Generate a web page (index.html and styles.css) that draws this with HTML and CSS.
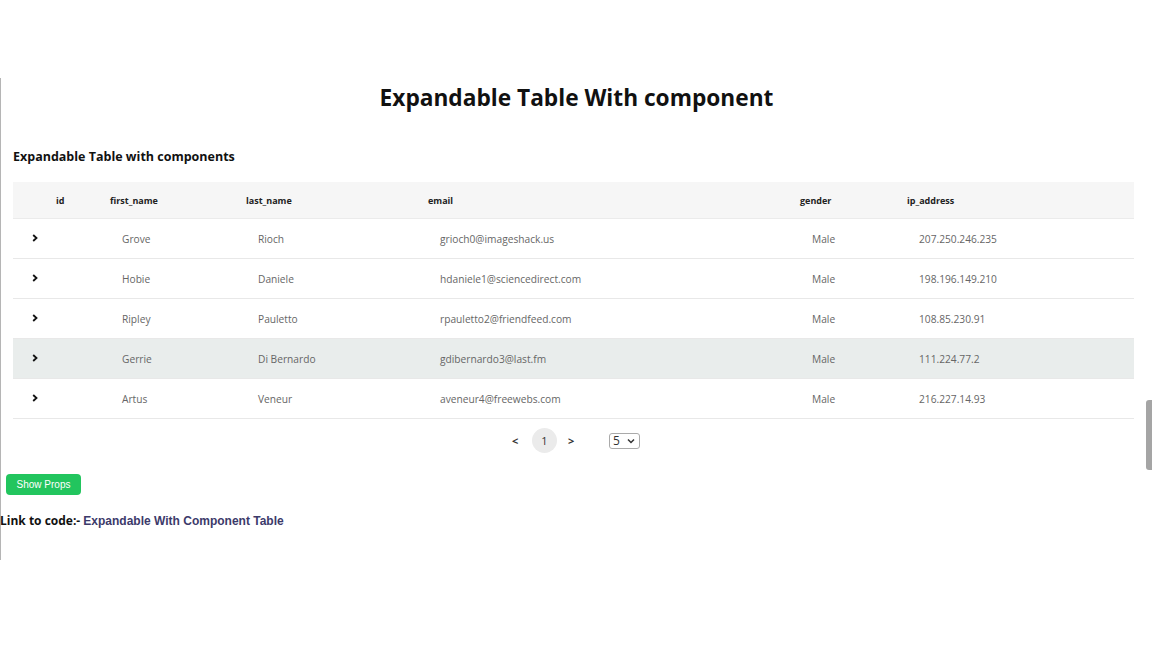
FILE: index.html
```html
<!DOCTYPE html>
<html>
<head>
<meta charset="utf-8">
<link rel="stylesheet" href="styles.css">
</head>
<body>
<div class="page">
  <div class="frame">
    <h1 class="title">Expandable Table With component</h1>
    <h2 class="subtitle">Expandable Table with components</h2>
    <table class="grid">
      <colgroup>
        <col class="c-exp"><col class="c-id"><col class="c-fn"><col class="c-ln"><col class="c-em"><col class="c-gd"><col class="c-ip">
      </colgroup>
      <thead>
        <tr><th></th><th>id</th><th>first_name</th><th>last_name</th><th>email</th><th>gender</th><th>ip_address</th></tr>
      </thead>
      <tbody>
        <tr><td class="exp"><svg class="chev" width="6" height="8" viewBox="0 0 6 8"><polyline points="1.2,1 4.5,4 1.2,7" fill="none" stroke="#111" stroke-width="1.8"/></svg></td><td></td><td>Grove</td><td>Rioch</td><td>grioch0@imageshack.us</td><td>Male</td><td>207.250.246.235</td></tr>
        <tr><td class="exp"><svg class="chev" width="6" height="8" viewBox="0 0 6 8"><polyline points="1.2,1 4.5,4 1.2,7" fill="none" stroke="#111" stroke-width="1.8"/></svg></td><td></td><td>Hobie</td><td>Daniele</td><td>hdaniele1@sciencedirect.com</td><td>Male</td><td>198.196.149.210</td></tr>
        <tr><td class="exp"><svg class="chev" width="6" height="8" viewBox="0 0 6 8"><polyline points="1.2,1 4.5,4 1.2,7" fill="none" stroke="#111" stroke-width="1.8"/></svg></td><td></td><td>Ripley</td><td>Pauletto</td><td>rpauletto2@friendfeed.com</td><td>Male</td><td>108.85.230.91</td></tr>
        <tr class="hover"><td class="exp"><svg class="chev" width="6" height="8" viewBox="0 0 6 8"><polyline points="1.2,1 4.5,4 1.2,7" fill="none" stroke="#111" stroke-width="1.8"/></svg></td><td></td><td>Gerrie</td><td>Di Bernardo</td><td>gdibernardo3@last.fm</td><td>Male</td><td>111.224.77.2</td></tr>
        <tr><td class="exp"><svg class="chev" width="6" height="8" viewBox="0 0 6 8"><polyline points="1.2,1 4.5,4 1.2,7" fill="none" stroke="#111" stroke-width="1.8"/></svg></td><td></td><td>Artus</td><td>Veneur</td><td>aveneur4@freewebs.com</td><td>Male</td><td>216.227.14.93</td></tr>
      </tbody>
    </table>
    <div class="pager">
      <span class="nav">&lt;</span>
      <span class="pnum">1</span>
      <span class="nav">&gt;</span>
      <span class="sel">5 <svg width="8" height="6" viewBox="0 0 8 6"><polyline points="1,1.5 4,4.5 7,1.5" fill="none" stroke="#333" stroke-width="1.5"/></svg></span>
    </div>
    <button class="btn">Show Props</button>
    <p class="link">Link to code:- <a href="#">Expandable With Component Table</a></p>
  </div>
  <div class="scroll"></div>
</div>
</body>
</html>
```

FILE: styles.css
```css
html, body { margin: 0; padding: 0; background: #fff; }
body { font-family: "Open Sans", "Noto Sans", sans-serif; color: #111; }
.page { height: 648px; position: relative; overflow: hidden; }
.frame {
  margin-top: 78px;
  border-left: 1px solid #b5b5b5;
  height: 482px;
  box-sizing: border-box;
  padding-top: 6px;
}
.title {
  margin: 0;
  text-align: center;
  font-size: 22.7px;
  font-weight: 700;
  line-height: 28px;
}
.subtitle {
  margin: 36px 0 0 12px;
  font-size: 12.5px;
  font-weight: 700;
  line-height: 18px;
}
.grid {
  margin: 16px 0 0 12px;
  width: 1121px;
  border-collapse: collapse;
  table-layout: fixed;
}
.c-exp { width: 31px; }
.c-id { width: 54px; }
.c-fn { width: 136px; }
.c-ln { width: 182px; }
.c-em { width: 372px; }
.c-gd { width: 107px; }
.c-ip { width: 239px; }
.grid th {
  background: #f6f6f6;
  height: 36px;
  padding: 2px 0 0 12px;
  text-align: left;
  font-size: 9px;
  line-height: 12px;
  font-weight: 700;
  color: #222;
  border-bottom: 1px solid #ebebeb;
  box-sizing: border-box;
}
.grid td {
  height: 40px;
  box-sizing: border-box;
  padding: 2px 0 0 24px;
  font-size: 10.2px;
  line-height: 14px;
  color: #666;
  border-bottom: 1px solid #e8e8e8;
}
.grid td.exp { padding: 0 0 0 19px; line-height: 8px; }
.chev { display: block; margin-top: -1px; }
.grid tr.hover td { background: #e9edec; }
.pager {
  display: flex;
  align-items: center;
  margin: 10px 0 0 511px;
  height: 24px;
}
.nav { font-size: 11px; font-weight: 700; color: #333; width: 8px; }
.pnum {
  width: 25px; height: 25px; border-radius: 50%;
  background: #ebebeb; display: flex; align-items: center; justify-content: center;
  font-size: 11px; color: #333; margin: 0 11px 0 12px;
}
.sel {
  margin-left: 33px;
  border: 1px solid #aaa; border-radius: 3px;
  height: 16px; width: 31px; box-sizing: border-box;
  display: flex; align-items: center; justify-content: space-between;
  padding: 0 4px 0 3px; font-size: 12px; color: #333;
}
.btn {
  display: block;
  margin: 21px 0 0 5px;
  background: #22c55e;
  color: #fff;
  border: 0;
  border-radius: 4px;
  width: 75px; height: 21px;
  font-family: "Liberation Sans", Arial, sans-serif;
  font-size: 10px;
  padding: 0;
}
.link {
  margin: 17px 0 0 -1px;
  font-size: 12px;
  font-weight: 700;
  color: #111;
}
.link a {
  color: #3c3a6a;
  text-decoration: none;
  font-family: "Liberation Sans", Arial, sans-serif;
}
.scroll {
  position: absolute;
  right: 0; top: 400px;
  width: 6px; height: 70px;
  background: #a5a5a5;
  border-radius: 3px 0 0 3px;
}
```
